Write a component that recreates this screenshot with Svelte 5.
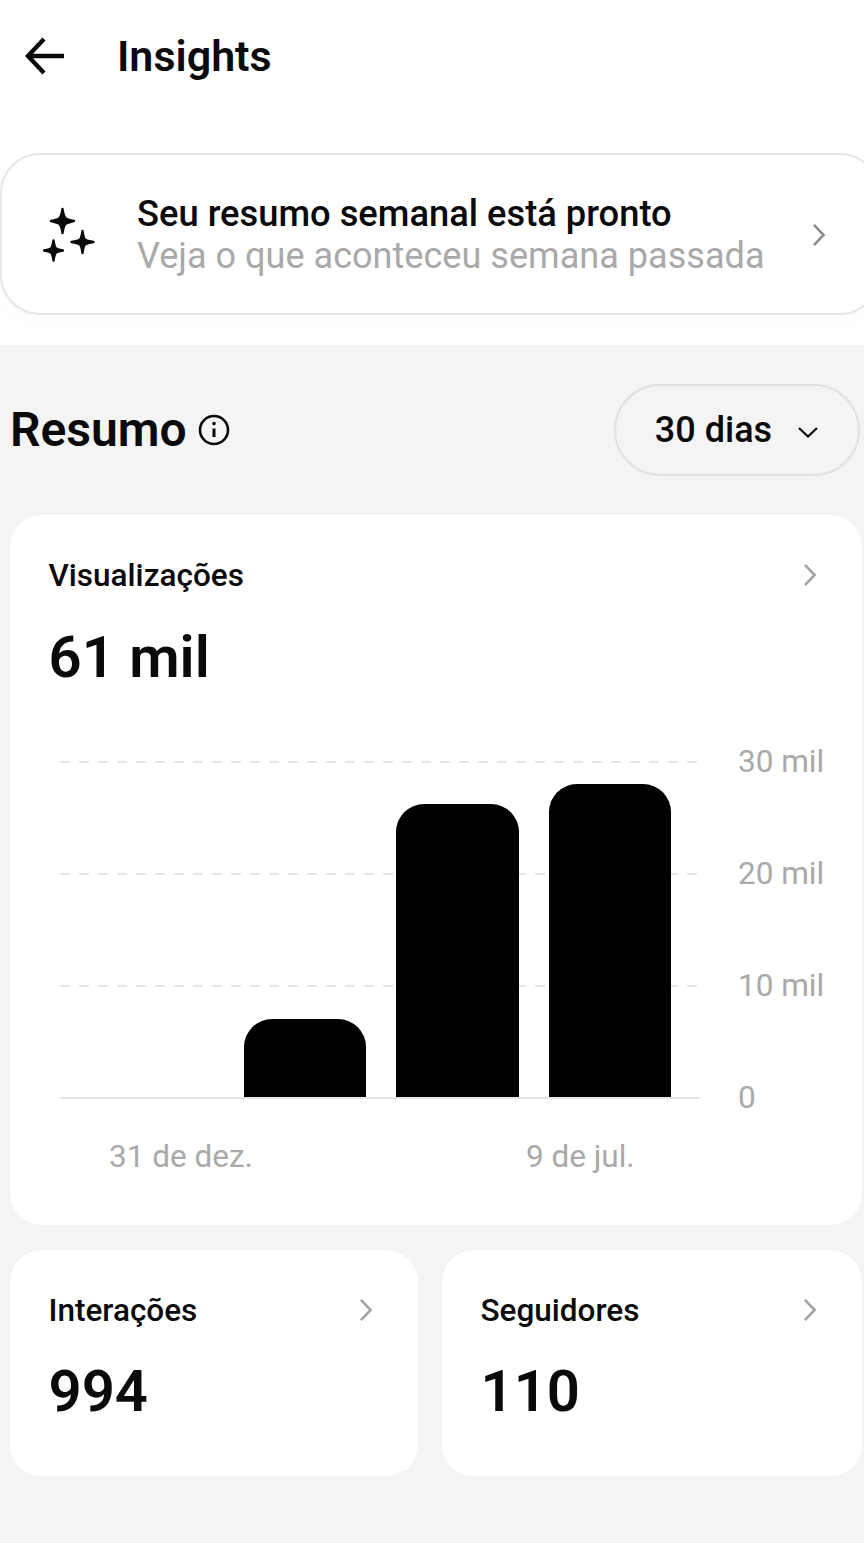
<script>
  const bars = [
    { id: 'a', height: 78 },
    { id: 'b', height: 293 },
    { id: 'c', height: 313 }
  ];
  const ticks = ['30 mil', '20 mil', '10 mil', '0'];
  const small = [
    { label: 'Interações', value: '994' },
    { label: 'Seguidores', value: '110' }
  ];
</script>

{#snippet chevron(cls)}
  <svg class={cls} viewBox="0 0 16 28" fill="none" stroke="currentColor" stroke-width="2.8">
    <path d="M2.5 3 L13 14 L2.5 25" />
  </svg>
{/snippet}

<div class="page">
  <section class="top">
    <header class="bar">
      <svg class="back" viewBox="0 0 42 40" fill="none" stroke="#0a0a0a" stroke-width="4.4">
        <path d="M20 3 L4 20 L20 37 M4 20 H40" />
      </svg>
      <h1>Insights</h1>
    </header>

    <div class="banner">
      <svg class="sparkles" viewBox="0 0 56 56" fill="#0a0a0a" stroke="#0a0a0a" stroke-width="2.4" stroke-linejoin="round">
        <path d="M21.500 3 Q22.500 10 24.500 12 Q26 13.500 33 15 Q26 16.500 24.500 18 Q22.500 20 21.500 27 Q20.500 20 18.500 18 Q17 16.500 10 15 Q17 13.500 18.500 12 Q20.500 10 21.500 3 Z" />
        <path d="M41.500 25 Q42.500 32 44 33.500 Q46 35 52.500 36 Q46 37 44 38.500 Q42.500 40 41.500 47 Q40.500 40 39 38.500 Q37 37 30.500 36 Q37 35 39 33.500 Q40.500 32 41.500 25 Z" />
        <path d="M12.500 34.500 Q13.500 41 15 42.500 Q17 44 22 44.500 Q17 45 15 46.500 Q13.500 48 12.500 54.500 Q11.500 48 10 46.500 Q8 45 3 44.500 Q8 44 10 42.500 Q11.500 41 12.500 34.500 Z" />
      </svg>
      <div class="banner-text">
        <div class="banner-title">Seu resumo semanal está pronto</div>
        <div class="banner-sub">Veja o que aconteceu semana passada</div>
      </div>
      {@render chevron('chev banner-chev')}
    </div>
  </section>

  <section class="body">
    <div class="summary">
      <div class="summary-left">
        <h2>Resumo</h2>
        <svg class="info" viewBox="0 0 32 32" fill="none" stroke="#0a0a0a">
          <circle cx="16" cy="16" r="14" stroke-width="2.6" />
          <path d="M16 14.500 V23" stroke-width="3" />
          <circle cx="16" cy="9.500" r="1.800" fill="#0a0a0a" stroke="none" />
        </svg>
      </div>
      <div class="pill">
        <span>30 dias</span>
        <svg class="down" viewBox="0 0 22 14" fill="none" stroke="#0a0a0a" stroke-width="2.2">
          <path d="M2 3 L11 11.500 L20 3" />
        </svg>
      </div>
    </div>

    <div class="card main">
      <div class="card-head">
        <span class="label">Visualizações</span>
        {@render chevron('chev')}
      </div>
      <div class="big">61 mil</div>

      <div class="chart">
        <div class="plot">
          <div class="lines">
            <i></i><i></i><i></i>
          </div>
          <div class="bars">
            {#each bars as b (b.id)}
              <div class="col" style="height: {b.height}px"></div>
            {/each}
          </div>
        </div>
        <div class="ticks">
          {#each ticks as t}
            <span>{t}</span>
          {/each}
        </div>
      </div>

      <div class="dates">
        <span>31 de dez.</span>
        <span>9 de jul.</span>
      </div>
    </div>

    <div class="pair">
      {#each small as s}
        <div class="card mini">
          <div class="card-head">
            <span class="label">{s.label}</span>
            {@render chevron('chev')}
          </div>
          <div class="num">{s.value}</div>
        </div>
      {/each}
    </div>
  </section>
</div>

<style>
  :global(body) {
    margin: 0;
    background: #f4f4f4;
  }

  .page {
    font-family: Roboto, "Liberation Sans", sans-serif;
    color: #0a0a0a;
    width: 864px;
    height: 1543px;
    overflow: hidden;
    display: flex;
    flex-direction: column;
  }

  .top {
    background: #fff;
    height: 345px;
    flex: none;
    box-sizing: border-box;
    padding-top: 30px;
  }

  .bar {
    display: flex;
    align-items: center;
    height: 52px;
    padding-left: 24px;
    gap: 51px;
  }

  .back {
    width: 42px;
    height: 40px;
    flex: none;
  }

  h1 {
    margin: 0;
    font-size: 43px;
    font-weight: 600;
    line-height: 52px;
  }

  .banner {
    margin-top: 71px;
    height: 162px;
    width: 880px;
    box-sizing: border-box;
    border: 2px solid #e6e6e6;
    border-radius: 40px;
    background: #fff;
    display: flex;
    align-items: center;
    padding-left: 39px;
    box-shadow: 0 6px 16px rgba(0, 0, 0, 0.02);
  }

  .sparkles {
    width: 56px;
    height: 56px;
    flex: none;
  }

  .banner-text {
    margin-left: 40px;
    width: 660px;
    padding-top: 2px;
  }

  .banner-title {
    font-size: 36.300px;
    font-weight: 500;
    line-height: 42px;
  }

  .banner-sub {
    font-size: 36.100px;
    line-height: 42px;
    color: #a9a9a9;
  }

  .chev {
    width: 16px;
    height: 26px;
    color: #a3a3a3;
    flex: none;
  }

  .banner-chev {
    margin-left: 14px;
    margin-top: 2px;
    color: #8f8f8f;
  }

  .body {
    flex: 1;
    background: #f4f4f4;
    padding: 0 2px 0 10px;
  }

  .summary {
    height: 170px;
    display: flex;
    align-items: center;
    justify-content: space-between;
  }

  .summary-left {
    display: flex;
    align-items: center;
    gap: 11px;
  }

  h2 {
    margin: 0;
    font-size: 48px;
    font-weight: 600;
    line-height: 52px;
  }

  .info {
    width: 32px;
    height: 32px;
  }

  .pill {
    width: 246px;
    height: 92px;
    box-sizing: border-box;
    border: 2px solid #e2e2e2;
    border-radius: 46px;
    display: flex;
    align-items: center;
    justify-content: center;
    gap: 25px;
    font-size: 36px;
    font-weight: 500;
    margin-right: 2px;
  }

  .down {
    width: 22px;
    height: 14px;
    margin-top: 3px;
  }

  .card {
    background: #fff;
    border-radius: 32px;
    box-sizing: border-box;
  }

  .main {
    height: 710px;
    padding: 38px 44px 0 38.500px;
  }

  .card-head {
    display: flex;
    align-items: center;
    justify-content: space-between;
    height: 44px;
  }

  .label {
    font-size: 31.500px;
    font-weight: 500;
  }

  .big {
    font-size: 58px;
    font-weight: 600;
    line-height: 64px;
    margin-top: 28px;
  }

  .chart {
    display: flex;
    margin-top: 72px;
    margin-left: 11.500px;
    height: 336px;
  }

  .plot {
    position: relative;
    width: 640px;
    height: 336px;
    flex: none;
    border-bottom: 2px solid #e6e6e6;
  }

  .lines {
    position: absolute;
    inset: 0;
    display: flex;
    flex-direction: column;
  }

  .lines i {
    display: block;
    height: 112px;
    background: repeating-linear-gradient(90deg, #e6e6e6 0 10px, transparent 10px 19px) top left / 100% 2px no-repeat;
  }

  .bars {
    position: absolute;
    inset: 0;
    display: flex;
    align-items: flex-end;
    justify-content: flex-end;
    gap: 30px;
    padding-right: 29px;
  }

  .col {
    width: 122.500px;
    background: #000;
    border-radius: 28px 28px 0 0;
  }

  .ticks {
    margin-left: 38px;
    margin-top: 1px;
    height: 336px;
    display: flex;
    flex-direction: column;
    justify-content: space-between;
    font-size: 31.500px;
    color: #a9a9a9;
    white-space: nowrap;
  }

  .ticks span {
    height: 0;
    line-height: 0;
  }

  .dates {
    display: flex;
    margin-top: 42px;
    margin-left: 60.500px;
    font-size: 31.500px;
    line-height: 36px;
    color: #a9a9a9;
  }

  .dates span:first-child {
    width: 417px;
  }

  .pair {
    display: grid;
    grid-template-columns: 408px 420px;
    gap: 24px;
    margin-top: 25px;
  }

  .mini {
    height: 226px;
    padding: 38px 44px 0 38.500px;
  }

  .num {
    font-size: 58px;
    font-weight: 600;
    line-height: 64px;
    margin-top: 27px;
  }
</style>
